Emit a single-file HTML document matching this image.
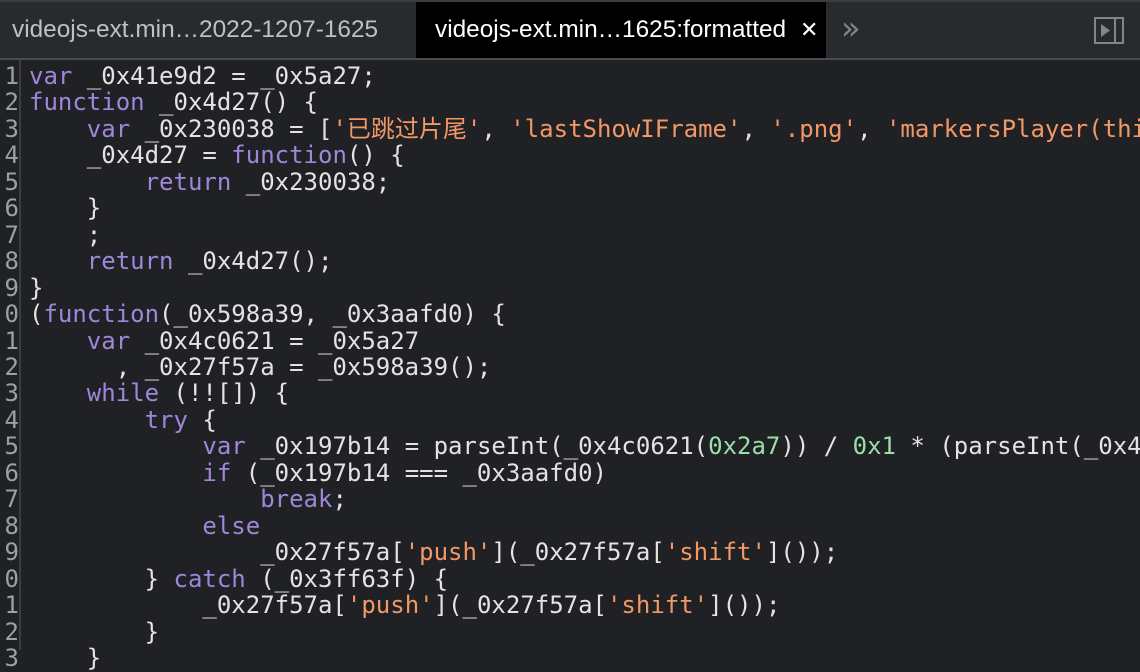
<!DOCTYPE html>
<html><head><meta charset="utf-8"><style>
html,body{margin:0;padding:0;width:1140px;height:650px;overflow:hidden;background:#202124;}
#bar{position:absolute;left:0;top:0;width:1140px;height:56px;background:#292a2d;border-top:2px solid #3c3d41;border-bottom:2px solid #4a4b4f;box-sizing:content-box;}
.tab{position:absolute;top:0;height:56px;line-height:56px;font-family:"Liberation Sans",sans-serif;font-size:24.4px;}
#t1{left:12px;color:#bdc1c6;}
#t2{left:416px;width:410px;background:#000;color:#fff;padding-left:19px;box-sizing:border-box;}
#t2 .x{position:absolute;left:384px;top:0;font-size:22px;}
#more{position:absolute;left:841px;top:0;line-height:52px;color:#80868b;font-family:"DejaVu Sans",sans-serif;font-size:32px;}
#gut{position:absolute;left:0;top:60px;width:19px;height:590px;border-right:2px solid #3c3d41;}
#lines{position:absolute;left:0;top:63px;width:19px;font-family:"DejaVu Sans Mono",monospace;font-size:24px;line-height:26.45px;color:#9aa0a6;white-space:pre;text-align:right;overflow:hidden;}
#txt{position:absolute;left:29px;top:63px;font-family:"DejaVu Sans Mono","Noto Sans CJK SC",monospace;font-size:24px;line-height:26.45px;color:#e3e3e3;white-space:pre;}
.k{color:#9f86d9;}.s{color:#f29766;}.n{color:#9bdfa8;}
</style></head><body>
<div id="bar">
<div class="tab" id="t1">videojs-ext.min…2022-1207-1625</div>
<div class="tab" id="t2">videojs-ext.min…1625:formatted<span class="x">✕</span></div>
<div id="more">»</div>
<svg style="position:absolute;left:1094px;top:15px" width="30" height="28" viewBox="0 0 30 28"><rect x="1" y="1" width="28" height="25" fill="none" stroke="#80868b" stroke-width="2"/><line x1="21" y1="1" x2="21" y2="26" stroke="#80868b" stroke-width="2"/><path d="M7 7 L16 13.5 L7 20 Z" fill="#80868b"/></svg>
</div>
<div id="gut"></div>
<div id="lines">1
2
3
4
5
6
7
8
9
0
1
2
3
4
5
6
7
8
9
0
1
2
3</div>
<div id="txt"><span class="k">var</span> _0x41e9d2 = _0x5a27;
<span class="k">function</span> _0x4d27() {
    <span class="k">var</span> _0x230038 = [<span class="s">'已跳过片尾'</span>, <span class="s">'lastShowIFrame'</span>, <span class="s">'.png'</span>, <span class="s">'markersPlayer(this'</span>
    _0x4d27 = <span class="k">function</span>() {
        <span class="k">return</span> _0x230038;
    }
    ;
    <span class="k">return</span> _0x4d27();
}
(<span class="k">function</span>(_0x598a39, _0x3aafd0) {
    <span class="k">var</span> _0x4c0621 = _0x5a27
      , _0x27f57a = _0x598a39();
    <span class="k">while</span> (!![]) {
        <span class="k">try</span> {
            <span class="k">var</span> _0x197b14 = parseInt(_0x4c0621(<span class="n">0x2a7</span>)) / <span class="n">0x1</span> * (parseInt(_0x4c0
            <span class="k">if</span> (_0x197b14 === _0x3aafd0)
                <span class="k">break</span>;
            <span class="k">else</span>
                _0x27f57a[<span class="s">'push'</span>](_0x27f57a[<span class="s">'shift'</span>]());
        } <span class="k">catch</span> (_0x3ff63f) {
            _0x27f57a[<span class="s">'push'</span>](_0x27f57a[<span class="s">'shift'</span>]());
        }
    }</div>
</body></html>
